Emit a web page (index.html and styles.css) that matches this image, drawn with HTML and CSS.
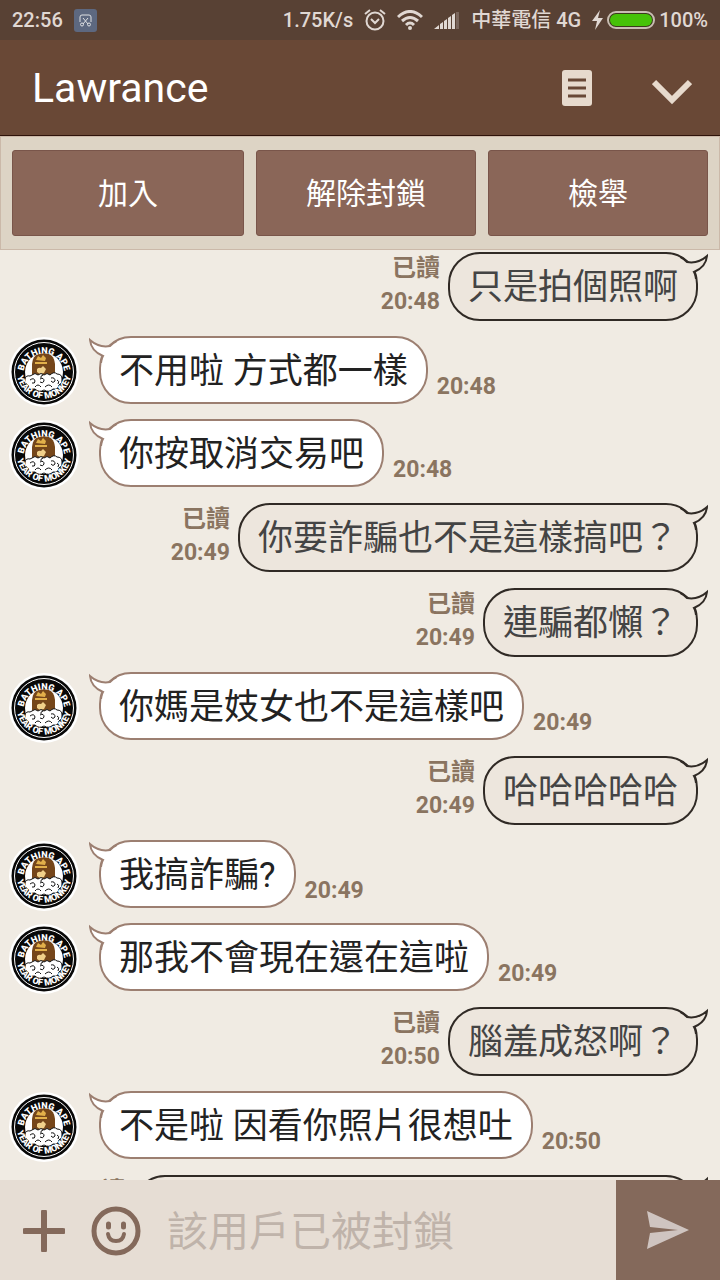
FILE: index.html
```
<!DOCTYPE html>
<html lang="zh-Hant">
<head>
  <meta charset="UTF-8" />
  <meta name="viewport" content="width=device-width, initial-scale=1.0" />
  <title>Lawrance</title>
  <link rel="stylesheet" href="styles.css">
</head>
<body>

  <!-- Shared shapes -->
  <svg class="sprite" aria-hidden="true">
    <symbol id="avatar" viewBox="0 0 70 70">
      <circle cx="35" cy="35" r="35" fill="#fff"/>
      <circle cx="35" cy="35" r="32.500" fill="#080808"/>
      <circle cx="35" cy="35" r="29.500" fill="none" stroke="#fff" stroke-width="1"/>
      <path id="arc-top" d="M14.500 37a20.500 20.500 0 0 1 41 0" fill="none"/>
      <path id="arc-bottom" d="M7.500 34a27.500 27.500 0 0 0 55 0" fill="none"/>
      <circle cx="35" cy="35" r="19" fill="#fff"/>
      <path d="M23 41V27q1-11 11.500-11T46 27v14z" fill="#75461a"/>
      <path d="M27 23l2-4 3 2 2-3 3 3-1 3zM26 25h12v2H26z" fill="#e2b04a"/>
      <path d="M28 32q2-2 4-1l2-2 3 3-2 4-4 1-3-2z" fill="#f0d08a"/>
      <path d="M23 38q3-3 6 0 3-3 6 0 3-3 6 0 4-4 7-1 5 0 5 5 1 4-3 6-1 5-6 4-4 4-9 1-5 3-9-1-6 1-7-4-4-2-3-6 1-4 5-3z" fill="#fff" stroke="#111" stroke-width="1"/>
      <path d="M21 43q4-3 5 1 0 3-3 2M31 42q4-2 4 2-1 3-4 1M42 41q4-1 4 3-2 3-4 0M26 50q3-4 6 0M36 50q4-4 7 0M48 43q3 1 1 4M34 38q-3 1-2 3" fill="none" stroke="#111" stroke-width="1"/>
      <text class="badge-text"><textPath href="#arc-top" startOffset="50%">BATHING APE</textPath></text>
      <text class="badge-text"><textPath href="#arc-bottom" startOffset="50%">YEAR OF MONKEY</textPath></text>
    </symbol>
    <symbol id="tail-out" viewBox="0 0 28 26">
      <path d="M5 8Q16 12 27 4Q25 14 14 20L2 16z" fill="#ede6dd"/>
      <path d="M0 4Q4 6 7 9Q18 11 27 3Q26 14 14 19Q16 22 16 26" fill="none" stroke="#302a25" stroke-width="2"/>
    </symbol>
    <symbol id="tail-in" viewBox="0 0 28 26">
      <path d="M23 8Q12 12 1 4Q3 14 14 20L26 16z" fill="#fff"/>
      <path d="M28 4Q24 6 21 9Q10 11 1 3Q2 14 14 19Q12 22 12 26" fill="none" stroke="#9c7f71" stroke-width="2"/>
    </symbol>
  </svg>

  <div class="app">
    <div class="status-bar">
      <span>22:56</span>
      <svg width="23" height="23" viewBox="0 0 23 23">
        <rect width="23" height="23" rx="3" fill="#5d6880"/>
        <path d="M6 13V8q0-2 2-2h7q2 0 2 2v5M9 9l5 6M14 9l-5 6" fill="none" stroke="#dfe0e3"/>
        <circle cx="8" cy="15.500" r="1.500" fill="none" stroke="#dfe0e3"/><circle cx="15" cy="15.500" r="1.500" fill="none" stroke="#dfe0e3"/>
      </svg>
      <span class="status-speed">1.75K/s</span>
      <svg width="22" height="22" viewBox="0 0 22 22" fill="none" stroke="#e0d8d3" stroke-width="2">
        <circle cx="11" cy="12" r="8.500"/><path d="M7 10l4 4 4-4M1 5l5-4M21 5l-5-4"/>
      </svg>
      <svg width="26" height="20" viewBox="0 0 26 20" fill="none" stroke="#e0d8d3" stroke-width="3">
        <path d="M1 7q12-11 24 0M5 11q8-7 16 0M9 15q4-4 8 0"/><circle cx="13" cy="18" r="2" fill="#e0d8d3" stroke="none"/>
      </svg>
      <svg width="26" height="18" viewBox="0 0 26 18" fill="#e0d8d3">
        <path d="M0 18l5-4v4zM6 13l3-2v7H6zM10 10l3-2v10h-3zM14 7l3-2v13h-3zM18 4l3-2v16h-3z"/><path d="M22 1h3v17h-3z" opacity=".25"/>
      </svg>
      <span>中華電信 4G</span>
      <span class="battery">
        <svg width="11" height="20" viewBox="0 0 11 20" fill="#e0d8d3"><path d="M8 0L0 11h5L3 20l8-12H6z"/></svg>
        <svg width="48" height="18" viewBox="0 0 48 18"><rect x="1" y="1" width="46" height="16" rx="8" fill="#3b3a1c" stroke="#c9bdb3" stroke-width="2"/><rect x="3" y="3" width="42" height="12" rx="6" fill="#46c208"/></svg>
        <span>100%</span>
      </span>
    </div>

    <header class="header">
      <h1 class="header-title">Lawrance</h1>
      <button class="icon-button" type="button" aria-label="記事本">
        <svg width="30" height="36" viewBox="0 0 30 36"><rect width="30" height="36" rx="3" fill="#e7dacd"/><path d="M6 10h18M6 18h18M6 26h18" stroke="#694836" stroke-width="3"/></svg>
      </button>
      <button class="icon-button" type="button" aria-label="選單">
        <svg width="40" height="36" viewBox="0 0 40 36"><path d="M2 12l18 18 18-18" fill="none" stroke="#e7dacd" stroke-width="6"/></svg>
      </button>
    </header>

    <div class="actions">
      <button class="action action-first" type="button">加入</button>
      <button class="action" type="button">解除封鎖</button>
      <button class="action" type="button">檢舉</button>
    </div>

    <main class="chat">
      <div class="row row-out">
        <div class="meta"><span class="read">已讀</span><time>20:48</time></div>
        <div class="bubble">只是拍個照啊<svg class="tail"><use href="#tail-out"/></svg></div>
      </div>
      <div class="row row-in">
        <svg class="avatar"><use href="#avatar"/></svg>
        <div class="bubble">不用啦 方式都一樣<svg class="tail"><use href="#tail-in"/></svg></div>
        <div class="meta"><time>20:48</time></div>
      </div>
      <div class="row row-in">
        <svg class="avatar"><use href="#avatar"/></svg>
        <div class="bubble">你按取消交易吧<svg class="tail"><use href="#tail-in"/></svg></div>
        <div class="meta"><time>20:48</time></div>
      </div>
      <div class="row row-out">
        <div class="meta"><span class="read">已讀</span><time>20:49</time></div>
        <div class="bubble">你要詐騙也不是這樣搞吧？<svg class="tail"><use href="#tail-out"/></svg></div>
      </div>
      <div class="row row-out">
        <div class="meta"><span class="read">已讀</span><time>20:49</time></div>
        <div class="bubble">連騙都懶？<svg class="tail"><use href="#tail-out"/></svg></div>
      </div>
      <div class="row row-in">
        <svg class="avatar"><use href="#avatar"/></svg>
        <div class="bubble">你媽是妓女也不是這樣吧<svg class="tail"><use href="#tail-in"/></svg></div>
        <div class="meta"><time>20:49</time></div>
      </div>
      <div class="row row-out">
        <div class="meta"><span class="read">已讀</span><time>20:49</time></div>
        <div class="bubble">哈哈哈哈哈<svg class="tail"><use href="#tail-out"/></svg></div>
      </div>
      <div class="row row-in">
        <svg class="avatar"><use href="#avatar"/></svg>
        <div class="bubble">我搞詐騙?<svg class="tail"><use href="#tail-in"/></svg></div>
        <div class="meta"><time>20:49</time></div>
      </div>
      <div class="row row-in">
        <svg class="avatar"><use href="#avatar"/></svg>
        <div class="bubble">那我不會現在還在這啦<svg class="tail"><use href="#tail-in"/></svg></div>
        <div class="meta"><time>20:49</time></div>
      </div>
      <div class="row row-out">
        <div class="meta"><span class="read">已讀</span><time>20:50</time></div>
        <div class="bubble">腦羞成怒啊？<svg class="tail"><use href="#tail-out"/></svg></div>
      </div>
      <div class="row row-in">
        <svg class="avatar"><use href="#avatar"/></svg>
        <div class="bubble">不是啦 因看你照片很想吐<svg class="tail"><use href="#tail-in"/></svg></div>
        <div class="meta"><time>20:50</time></div>
      </div>
      <div class="row row-out">
        <div class="meta"><span class="read">已讀</span></div>
        <div class="bubble bubble-wide"><svg class="tail"><use href="#tail-out"/></svg></div>
      </div>
    </main>

    <form class="composer">
      <button class="composer-button" type="button" aria-label="新增">
        <svg width="42" height="42" viewBox="0 0 42 42"><path d="M2 21h38M21 2v38" stroke="#84695b" stroke-width="6" stroke-linecap="round"/></svg>
      </button>
      <button class="composer-button" type="button" aria-label="表情">
        <svg width="50" height="50" viewBox="0 0 50 50" fill="none" stroke="#84695b" stroke-width="5"><circle cx="25" cy="25" r="22"/><path d="M17 28q1 7 8 7t8-7" stroke-width="4" stroke-linecap="round"/><path d="M17.500 18v3M32.500 18v3" stroke-linecap="round"/></svg>
      </button>
      <input class="composer-input" type="text" placeholder="該用戶已被封鎖" aria-label="訊息">
      <button class="send" type="button" aria-label="傳送">
        <svg width="42" height="38" viewBox="0 0 42 38"><path d="M0 0l42 19L0 38l3-16 28-3-28-3z" fill="#cfc4c0"/></svg>
      </button>
    </form>
  </div>

</body>
</html>
```
FILE: styles.css
```
:root {
  --brown-dark: #584134;
  --brown: #694836;
  --brown-button: #8a6658;
  --brown-send: #84695b;
  --meta: #8a7460;
  --chat-bg: #f0ebe3;
}

* {
  box-sizing: border-box;
}

body {
  margin: 0;
  font-family: Roboto, "Noto Sans CJK TC", sans-serif;
  background: var(--chat-bg);
}

button {
  margin: 0;
  padding: 0;
  border: 0;
  background: none;
  font-family: inherit;
  cursor: pointer;
}

svg {
  display: block;
  flex-shrink: 0;
}

.sprite {
  display: none;
}

.app {
  display: flex;
  flex-direction: column;
  height: 100vh;
}

/* Status bar */
.status-bar {
  display: flex;
  align-items: center;
  gap: 11px;
  height: 40px;
  padding: 0 12px;
  background: var(--brown-dark);
  color: #e0d8d3;
  font-size: 20px;
  font-weight: 500;
  line-height: 24px;
  white-space: nowrap;
}

.status-speed {
  margin-left: auto;
}

.battery {
  display: flex;
  align-items: center;
  gap: 4px;
}

/* Header */
.header {
  display: flex;
  align-items: center;
  gap: 60px;
  height: 96px;
  padding: 0 28px 0 32px;
  background: var(--brown);
  border-bottom: 1px solid #2e130a;
}

.header-title {
  flex: 1;
  margin: 0;
  color: #fff;
  font-size: 41px;
  font-weight: 400;
}

/* Add / unblock / report */
.actions {
  display: flex;
  gap: 12px;
  padding: 13px 11px;
  background: #ddd4c5;
  border: 1px solid #cbb9a9;
}

.action {
  flex: 1 1 0;
  height: 86px;
  padding-bottom: 4px;
  border: 1px solid #79554a;
  border-radius: 3px;
  background: var(--brown-button);
  color: #fff;
  font-size: 30px;
}

.action-first {
  flex-basis: 14px;
}

/* Messages */
.chat {
  flex: 1;
  min-height: 0;
  padding: 1px 22px 0 9px;
  overflow: hidden;
}

.row {
  display: flex;
  margin-bottom: 15px;
}

.row-out {
  justify-content: flex-end;
  gap: 8px;
  padding-top: 1px;
}

.row-in {
  gap: 9px;
}

.avatar {
  width: 70px;
  height: 70px;
  margin: 1px 11px -3px 0;
}

.badge-text {
  fill: #fff;
  font-size: 9px;
  font-weight: 900;
  text-anchor: middle;
}

.bubble {
  position: relative;
  height: 68px;
  padding: 0 18px;
  border: 2px solid #9c7f71;
  border-radius: 32px;
  background: #fff;
  color: #222;
  font-size: 35px;
  line-height: 68px;
  white-space: nowrap;
}

.row-out .bubble {
  height: 69px;
  border-color: #302a25;
  background: #ede6dd;
  color: #444;
}

.bubble-wide {
  width: 82%;
}

.tail {
  position: absolute;
  top: -1px;
  left: -12px;
  width: 28px;
  height: 26px;
}

.row-out .tail {
  right: -12px;
  left: auto;
}

.meta {
  display: flex;
  flex-direction: column;
  justify-content: flex-end;
  align-items: flex-end;
  padding-bottom: 1px;
  color: var(--meta);
  font-size: 23px;
  font-weight: 700;
  line-height: 33px;
}

.row-out .meta {
  justify-content: flex-start;
}

.read {
  font-size: 24px;
}

/* Composer */
.composer {
  display: flex;
  align-items: center;
  height: 100px;
  padding-left: 23px;
  background: #e6ddd4;
}

.composer-button {
  margin-right: 26px;
  padding-top: 2px;
}

.composer-input {
  flex: 1;
  min-width: 0;
  height: 100%;
  padding: 4px 0 0;
  border: 0;
  outline: 0;
  background: none;
  color: #444;
  font-family: inherit;
  font-size: 41px;
}

.composer-input::placeholder {
  color: #bfb3aa;
}

.send {
  display: flex;
  align-items: center;
  justify-content: center;
  width: 104px;
  height: 100%;
  background: var(--brown-send);
}
```
